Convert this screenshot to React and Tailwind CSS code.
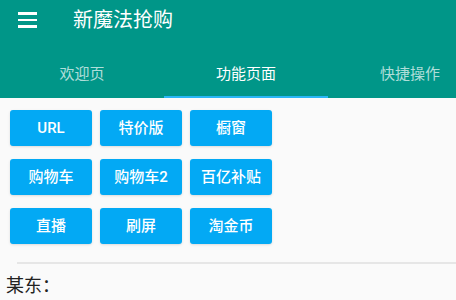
import { Menu } from "lucide-react";

const tabs = ["欢迎页", "功能页面", "快捷操作"];
const buttons = [
  ["URL", "特价版", "橱窗"],
  ["购物车", "购物车2", "百亿补贴"],
  ["直播", "刷屏", "淘金币"],
];

const font = {
  fontFamily: '"Roboto", "Noto Sans CJK SC", sans-serif',
};

export default function App() {
  return (
    <div
      className="w-[456px] h-[300px] overflow-hidden bg-[#fafafa]"
      style={font}
    >
      <div className="bg-[#009688]">
        <div className="h-10 flex items-center">
          <div className="w-[73px] pl-[18px] flex items-center">
            <div className="flex flex-col gap-[4px] w-[19px]">
              <div className="h-[2.5px] bg-white"></div>
              <div className="h-[2.5px] bg-white"></div>
              <div className="h-[2.5px] bg-white"></div>
            </div>
          </div>
          <span className="text-white text-[20px] leading-none">新魔法抢购</span>
        </div>
        <div className="flex h-[58px] w-[492px]">
          {tabs.map((t, i) => (
            <div key={t} className="w-[164px] flex flex-col">
              <div
                className={`flex-1 flex items-center justify-center pt-[12px] text-[15px] ${
                  i === 1 ? "text-white" : "text-white/70"
                }`}
              >
                {t}
              </div>
              <div
                className={`h-[2px] ${i === 1 ? "bg-[#29b6f6]" : "bg-transparent"}`}
              ></div>
            </div>
          ))}
        </div>
      </div>

      <div className="pl-[10px] pt-[12px] flex flex-col gap-[13px]">
        {buttons.map((row, r) => (
          <div key={r} className="flex gap-[8px]">
            {row.map((b) => (
              <div
                key={b}
                className="w-[82px] h-[36px] rounded-[3px] bg-[#03a9f4] shadow-sm flex items-center justify-center text-white text-[15px] font-medium"
              >
                {b}
              </div>
            ))}
          </div>
        ))}
      </div>

      <div className="ml-[17px] mt-[18px] h-[2px] bg-[#e6e6e6]"></div>

      <div className="pl-[6px] pt-[13px] text-[18px] leading-none text-[#222]">
        某东：
      </div>
    </div>
  );
}
